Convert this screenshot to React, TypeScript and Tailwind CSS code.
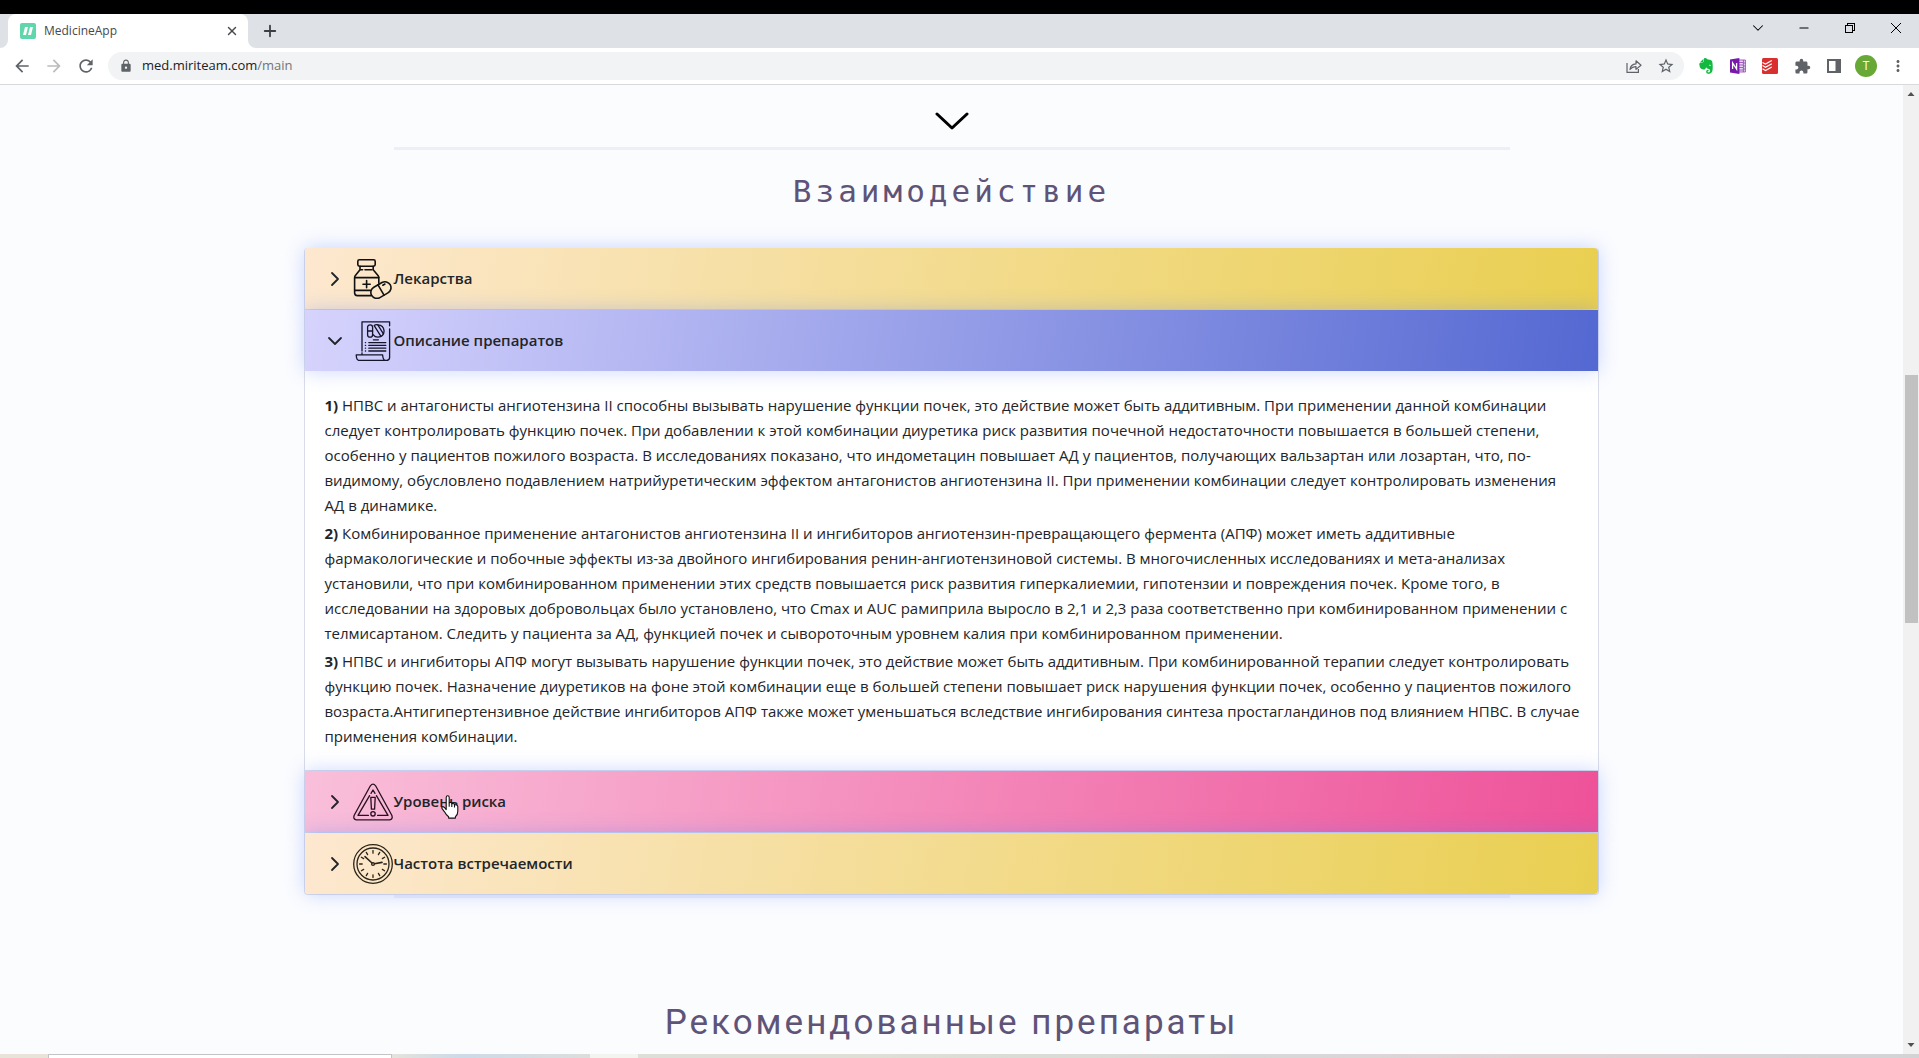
import { useState, type ReactNode } from "react";
import { ChevronDown, ChevronRight, Minus, Plus, X } from "lucide-react";
import { FaEvernote } from "react-icons/fa";
import {
  MdArrowBack,
  MdArrowForward,
  MdExtension,
  MdLock,
  MdMoreVert,
  MdRefresh,
  MdStarBorder,
} from "react-icons/md";

const DESCRIPTION = [
  "НПВС и антагонисты ангиотензина II способны вызывать нарушение функции почек, это действие может быть аддитивным. При применении данной комбинации следует контролировать функцию почек. При добавлении к этой комбинации диуретика риск развития почечной недостаточности повышается в большей степени, особенно у пациентов пожилого возраста. В исследованиях показано, что индометацин повышает АД у пациентов, получающих вальзартан или лозартан, что, по-видимому, обусловлено подавлением натрийуретическим эффектом антагонистов ангиотензина II. При применении комбинации следует контролировать изменения АД\u00a0в\u00a0динамике.",
  "Комбинированное применение антагонистов ангиотензина II и ингибиторов ангиотензин-превращающего фермента (АПФ) может иметь аддитивные фармакологические и побочные эффекты из-за двойного ингибирования ренин-ангиотензиновой системы. В многочисленных исследованиях и мета-анализах установили, что при комбинированном применении этих средств повышается риск развития гиперкалиемии, гипотензии и повреждения почек. Кроме того, в исследовании на здоровых добровольцах было установлено, что Cmax и AUC рамиприла выросло в 2,1 и 2,3 раза соответственно при комбинированном применении с телмисартаном. Следить у пациента за АД, функцией почек и сывороточным уровнем калия при комбинированном применении.",
  "НПВС и ингибиторы АПФ могут вызывать нарушение функции почек, это действие может быть аддитивным. При комбинированной терапии следует контролировать функцию почек. Назначение диуретиков на фоне этой комбинации еще в большей степени повышает риск нарушения функции почек, особенно у пациентов пожилого возраста.Антигипертензивное действие ингибиторов АПФ также может уменьшаться вследствие ингибирования синтеза простагландинов под влиянием НПВС. В случае применения комбинации.",
];

function MedicineIcon() {
  return (
    <svg viewBox="0 0 40 40" className="size-10 shrink-0" fill="none" stroke="#111" strokeWidth="1.6" strokeLinecap="round" strokeLinejoin="round">
      <rect x="4.8" y="0.8" width="17.4" height="6.4" rx="1.6" />
      <path d="M7 7.4v3.4L2.4 16.4q-.8 1-.8 2.4v15q0 2.8 2.8 2.8h14M20.2 7.4v3.4l4.8 5.6q.8 1 .8 2.4v5.4" />
      <path d="M7.6 10.8h2M12 10.8h7M1.8 18.6h24M1.8 31.4h15.6" />
      <path d="M13.6 21.6v7.2M10 25.2h7.2" />
      <g transform="rotate(-30 28 31)">
        <rect x="17.2" y="25" width="21.4" height="12" rx="6" />
        <path d="M28 25v12M32 27.8h2.4" />
      </g>
    </svg>
  );
}

function DescriptionIcon() {
  return (
    <svg viewBox="0 0 40 40" className="size-10 shrink-0" fill="none" stroke="#14142b" strokeWidth="1.3" strokeLinecap="round" strokeLinejoin="round">
      <path d="M9 30V.8h27.6v4M36.6 8v28.6q0 2.8-2.8 2.8H6q-2.6 0-2.8-5.6h26.4q.4 5.6 2.8 5.6" />
      <path d="M9 31.8v1.6" />
      <rect x="14.6" y="3.8" width="5" height="12.4" rx="2.5" />
      <path d="M14.6 10h5M24.8 3.9q5.8.3 6.3 6-.2 5.600-6.200 6.300-3-.2-4.600-2.400" />
      <path d="M21.2 4.6l6.6 10.6M21.2 4.6q1.8-1.6 3.6-.7l5.600 9" />
      <path d="M20.4 18.8h5M15.8 21.6h17M15.8 24.4h17M15.8 27.2h17M15.8 30h17" />
      <path d="M12.4 21.6h.2M12.4 24.4h.2M12.4 27.2h.2M12.4 30h.2" />
    </svg>
  );
}

function RiskIcon() {
  return (
    <svg viewBox="0 0 40 40" className="size-10 shrink-0" fill="none" stroke="#2a1020" strokeWidth="1.3" strokeLinecap="round" strokeLinejoin="round">
      <path d="M17.4 3.8q2.6-3.4 5.2 0l16.2 29.4q1.4 4-2.2 4.6H3.4q-3.6-.6-2.2-4.6z" />
      <path d="M18 11.4l2-3.4 2 3.4M23.4 13.6L35 33.4H24.6M16.6 13.6L5 33.4h10.4" />
      <path d="M17.8 15.4h4.4l-.6 11.8h-3.2z" />
      <circle cx="20" cy="31.8" r="2.2" />
    </svg>
  );
}

const CLOCK_TICKS = [0, 30, 60, 90, 120, 150, 180, 210, 240, 270, 300, 330];

function ClockIcon() {
  return (
    <svg viewBox="0 0 40 40" className="size-10 shrink-0" fill="none" stroke="#2b2418" strokeWidth="1.3" strokeLinecap="round">
      <circle cx="20" cy="20" r="19.3" />
      <circle cx="20" cy="20" r="16" />
      {CLOCK_TICKS.map((angle) => (
        <path key={angle} d="M20 6.6v2.6" transform={`rotate(${angle} 20 20)`} />
      ))}
      <circle cx="20" cy="20" r="1.4" />
      <path d="M19 19l-7-6.4M21.4 19.8l7.6-1.4" strokeWidth="1.6" />
    </svg>
  );
}

function HandCursor() {
  return (
    <svg viewBox="0 0 18 24" className="pointer-events-none absolute top-6 left-[136px] h-6 w-[18px]" fill="#fff" stroke="#111" strokeWidth="1.1" strokeLinejoin="round">
      <path d="M5.2 14.6V2.4q0-1.7 1.5-1.7t1.5 1.7v5.4q1.3-1 2.6.2v.8q1.6-.9 2.7.5v.7q2.7-.9 3.3 1.4v4.9q0 3.6-2.4 5.4v1.4H7.6v-1.4Q4.8 19.5 3.5 16.8L.9 13.4q-.5-1.7 1.2-1.8 1.3.1 3.1 3z" />
      <path d="M8.2 7.8v4M10.8 8.8v3.2M13.5 10v2.4" />
    </svg>
  );
}

type SectionProps = {
  title: string;
  icon: ReactNode;
  color: string;
  open: boolean;
  onToggle: () => void;
  overlay?: ReactNode;
  children?: ReactNode;
};

function Section({ title, icon, color, open, onToggle, overlay, children }: SectionProps) {
  return (
    <div className="border-t border-[#d9dce8] first:border-t-0">
      <h3>
        <button
          type="button"
          aria-expanded={open}
          onClick={onToggle}
          className={`relative flex h-[61px] w-full cursor-pointer items-center pl-5 text-left text-[15px] font-semibold text-[#212529] shadow-[0_0_20px_rgba(80,120,255,0.3)] ${color}`}
        >
          <span className="mr-2 flex w-5 justify-center">
            {open ? <ChevronDown size={24} strokeWidth={1.8} className="shrink-0" /> : <ChevronRight size={24} strokeWidth={1.8} className="shrink-0" />}
          </span>
          {icon}
          {title}
          {overlay}
        </button>
      </h3>
      {open && children}
    </div>
  );
}

function InteractionAccordion() {
  const [opened, setOpened] = useState("description");
  const toggle = (id: string) => setOpened(opened === id ? "" : id);

  return (
    <div className="mx-auto w-[68%] rounded border-x border-b border-[#d9dce8] bg-white">
      <Section
        title="Лекарства"
        icon={<MedicineIcon />}
        color="rounded-t bg-[linear-gradient(100deg,#fde8d0,#e9cf50)]"
        open={opened === "medicines"}
        onToggle={() => toggle("medicines")}
      />
      <Section
        title="Описание препаратов"
        icon={<DescriptionIcon />}
        color="bg-[linear-gradient(100deg,#d6d3fd,#5468d2)]"
        open={opened === "description"}
        onToggle={() => toggle("description")}
      >
        <div className="space-y-[3px] pt-[22px] pr-[17px] pb-[21px] pl-[19px] text-[15px] leading-[25px] text-[#212529]">
          {DESCRIPTION.map((text, i) => (
            <p key={i}>
              <b>{i + 1})</b> {text}
            </p>
          ))}
        </div>
      </Section>
      <Section
        title="Уровень риска"
        icon={<RiskIcon />}
        color="bg-[linear-gradient(100deg,#f9bfda,#ee5299)]"
        open={opened === "risk"}
        onToggle={() => toggle("risk")}
        overlay={<HandCursor />}
      />
      <Section
        title="Частота встречаемости"
        icon={<ClockIcon />}
        color="rounded-b bg-[linear-gradient(100deg,#fde8d0,#e9cf50)]"
        open={opened === "frequency"}
        onToggle={() => toggle("frequency")}
      />
    </div>
  );
}

function TabStrip() {
  return (
    <div className="flex h-[34px] shrink-0 bg-[#dee1e6]">
      <div className="flex w-2 bg-white">
        <div className="flex-1 rounded-br-lg bg-[#dee1e6]" />
      </div>
      <div className="flex w-60 items-center rounded-t-lg bg-white pr-2 pl-3 text-xs text-[#45494d]">
        <svg viewBox="0 0 16 16" className="mr-2 size-4">
          <rect width="16" height="16" rx="2" fill="#5fd6ac" />
          <path d="M5 4h3L6 12H3zM10 4h3l-2 8H8z" fill="#fff" />
        </svg>
        <span className="flex-1">MedicineApp</span>
        <button type="button" aria-label="Закрыть вкладку" className="flex size-4 items-center justify-center">
          <X size={14} strokeWidth={2.4} />
        </button>
      </div>
      <div className="flex w-2 bg-white">
        <div className="flex-1 rounded-bl-lg bg-[#dee1e6]" />
      </div>
      <button type="button" aria-label="Новая вкладка" className="flex w-7 items-center justify-center text-[#3c4043]">
        <Plus size={18} strokeWidth={2.4} />
      </button>
      <div className="ml-auto flex h-7 text-black">
        <button type="button" aria-label="Поиск вкладок" className="flex w-[46px] items-center justify-center">
          <ChevronDown size={18} strokeWidth={1.4} />
        </button>
        <button type="button" aria-label="Свернуть" className="flex w-[46px] items-center justify-center">
          <Minus size={14} strokeWidth={1.8} />
        </button>
        <button type="button" aria-label="Развернуть" className="flex w-[46px] items-center justify-center">
          <svg viewBox="0 0 10 10" className="size-[10px]" fill="none" stroke="currentColor" shapeRendering="crispEdges">
            <path d="M.5 2.5h7v7h-7zM2.5 2V.5h7v7H8" />
          </svg>
        </button>
        <button type="button" aria-label="Закрыть" className="flex w-[46px] items-center justify-center">
          <svg viewBox="0 0 10 10" className="size-[10px]" stroke="currentColor">
            <path d="M0 0l10 10M10 0L0 10" />
          </svg>
        </button>
      </div>
    </div>
  );
}

function Toolbar() {
  return (
    <div className="flex h-[37px] shrink-0 items-center border-b border-[#d8d9dc] bg-white pr-[5px] pl-[6px] text-[#5f6368]">
      <button type="button" aria-label="Назад" className="flex w-8 justify-center">
        <MdArrowBack size={20} />
      </button>
      <button type="button" aria-label="Вперёд" className="flex w-8 justify-center text-[#babcbe]">
        <MdArrowForward size={20} />
      </button>
      <button type="button" aria-label="Обновить" className="flex w-8 justify-center">
        <MdRefresh size={20} />
      </button>
      <div className="ml-[6px] flex h-7 flex-1 items-center rounded-full bg-[#f1f3f4] pr-[2px] pl-[11px]">
        <MdLock size={14} />
        <a href="#main" className="ml-[9px] flex-1 text-[13px] text-[#202124]">
          med.miriteam.com<span className="text-[#70757a]">/main</span>
        </a>
        <button type="button" aria-label="Поделиться" className="flex w-8 justify-center">
          <svg viewBox="0 0 16 16" className="size-4" fill="none" stroke="currentColor" strokeWidth="1.2" strokeLinejoin="round">
            <path d="M1 5v9.4h11.4V11" />
            <path d="M4 11.5q.6-5.2 6-5.6V2.8L15 7.2l-5 4.2V8.6Q6.4 8.4 4 11.5z" />
          </svg>
        </button>
        <button type="button" aria-label="В закладки" className="flex w-8 justify-center">
          <MdStarBorder size={18} />
        </button>
      </div>
      <div className="ml-[6px] flex items-center">
        <button type="button" aria-label="Evernote" className="flex w-8 justify-center text-[#12b83f]">
          <FaEvernote size={18} />
        </button>
        <button type="button" aria-label="OneNote" className="flex w-8 justify-center">
          <svg viewBox="0 0 16 16" className="size-4">
            <path d="M8 2h7.4v12H8z" fill="#e9d8f2" stroke="#8a3fb0" strokeWidth=".8" />
            <path d="M9 4.5h4M9 7h4M9 9.5h4M9 12h4M13.4 2v12M13.4 5h2M13.4 8h2M13.4 11h2" stroke="#8a3fb0" strokeWidth=".8" />
            <path d="M0 1.6L9.4 0v16L0 14.4z" fill="#7719aa" />
            <path d="M2.6 11V5l4 6V5" fill="none" stroke="#fff" strokeWidth="1.3" />
          </svg>
        </button>
        <button type="button" aria-label="Todoist" className="flex w-8 justify-center">
          <svg viewBox="0 0 16 16" className="size-4" fill="none" stroke="#fff" strokeWidth="1.1">
            <rect width="16" height="16" rx="1.5" fill="#d9302f" stroke="none" />
            <path d="M.5 4.4l3 1.7L9.8 2.500M.5 7.600l3 1.700 6.300-3.600M.5 10.800l3 1.700 6.300-3.600" />
          </svg>
        </button>
        <button type="button" aria-label="Расширения" className="flex w-8 justify-center">
          <MdExtension size={17} />
        </button>
        <button type="button" aria-label="Боковая панель" className="flex w-8 justify-center">
          <svg viewBox="0 0 14 14" className="size-[14px]">
            <path d="M0 0h14v14H0zM2 2v10h6.5V2z" fill="currentColor" fillRule="evenodd" />
          </svg>
        </button>
        <button type="button" aria-label="Профиль" className="flex w-8 justify-center">
          <span className="flex size-[22px] items-center justify-center rounded-full bg-[#67a836] text-xs text-white">T</span>
        </button>
        <button type="button" aria-label="Меню" className="flex w-8 justify-center">
          <MdMoreVert size={18} />
        </button>
      </div>
    </div>
  );
}

function Scrollbar() {
  return (
    <div className="flex w-4 shrink-0 flex-col items-center bg-[#f1f1f1] text-[#505050]">
      <svg viewBox="0 0 16 17" className="h-[17px] w-4">
        <path d="M4.5 11L8 7l3.5 4z" fill="currentColor" />
      </svg>
      <div className="mt-[273px] h-[248px] w-[13px] bg-[#c1c1c1]" />
      <svg viewBox="0 0 16 17" className="mt-auto h-[17px] w-4">
        <path d="M4.5 6L8 10l3.5-4z" fill="currentColor" />
      </svg>
    </div>
  );
}

export default function App() {
  return (
    <div className="flex h-screen flex-col overflow-hidden bg-[#fbfcfe] font-['Open_Sans',sans-serif]">
      <div className="h-[14px] shrink-0 bg-black" />
      <TabStrip />
      <Toolbar />
      <div className="flex min-h-0 flex-1">
        <main className="min-w-0 flex-1 overflow-hidden text-[#5f5478]">
          <svg viewBox="0 0 34 18" className="mx-auto mt-[27px] h-[18px] w-[34px]" fill="none" stroke="#000" strokeWidth="3" strokeLinecap="round" strokeLinejoin="round">
            <path d="M2 2l15 14L32 2" />
          </svg>
          <hr className="mx-auto mt-[17px] w-[1116px] max-w-full border-t-[3px] border-[#eeeefa]" />
          <h2 className="mt-[21px] mb-[37px] text-center font-['DejaVu_Sans_Mono',monospace] text-[31px] leading-10 tracking-[4px]">
            Взаимодействие
          </h2>
          <InteractionAccordion />
          <hr className="mx-auto w-[1116px] max-w-full border-t-[3px] border-[#eeeefa]" />
          <h2 className="mt-[105px] text-center font-[Roboto,sans-serif] text-[35px] leading-10 tracking-[3px]">
            Рекомендованные препараты
          </h2>
        </main>
        <Scrollbar />
      </div>
      <div className="flex h-1 shrink-0 bg-[linear-gradient(90deg,#e8e4da_0%,#e8e4da_20%,#cddae8_24%,#dfdfda_32%,#dfdfd6_45%,#d8d8d8_65%,#e0d3d6_80%,#d3d3d5_100%)]">
        <div className="ml-12 w-[344px] border border-b-0 border-[#c4c4c4] bg-white" />
        <div className="ml-[198px] w-12 bg-[#f3f3ef]" />
      </div>
    </div>
  );
}
